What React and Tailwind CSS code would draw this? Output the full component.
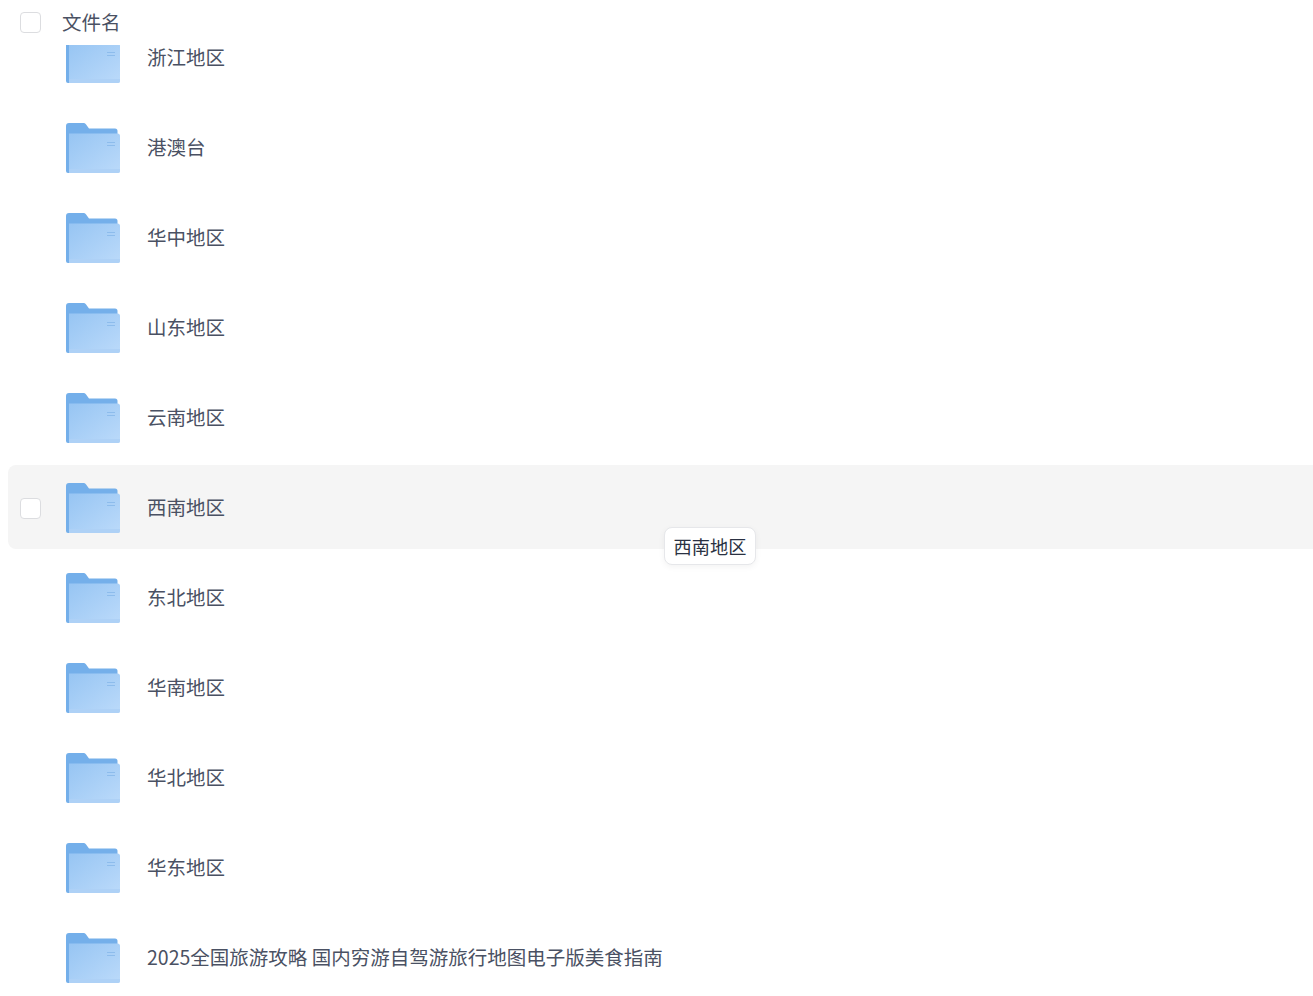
const rows = [
  "浙江地区",
  "港澳台",
  "华中地区",
  "山东地区",
  "云南地区",
  "西南地区",
  "东北地区",
  "华南地区",
  "华北地区",
  "华东地区",
  "2025全国旅游攻略 国内穷游自驾游旅行地图电子版美食指南",
];

const HOVERED = "西南地区";

function FolderIcon({ id }) {
  return (
    <svg width="54" height="50" viewBox="0 0 54 50" className="shrink-0 mt-[2px]">
      <defs>
        <linearGradient id={`front-${id}`} x1="0" y1="0" x2="1" y2="1">
          <stop offset="0" stopColor="#97c5f3" />
          <stop offset="1" stopColor="#bbdafa" />
        </linearGradient>
      </defs>
      <path d="M0 3a3 3 0 0 1 3-3h14.5a3 3 0 0 1 2.4 1.2L23 5.5h26a2.5 2.5 0 0 1 2.5 2.5v4H3v38H2a2 2 0 0 1-2-2z" fill="#74afea" />
      <path d="M3 10.5h48.5A2.5 2.5 0 0 1 54 13v35a2 2 0 0 1-2 2H3z" fill={`url(#front-${id})`} />
      <path d="M3 46h51v2a2 2 0 0 1-2 2H3z" fill="#aed1f6" />
      <path d="M41 19.5h8M41 22.5h8" stroke="#8dbcec" strokeWidth="1" />
    </svg>
  );
}

function Checkbox() {
  return <div className="w-[21px] h-[21px] bg-white border border-[#dcdde0] rounded-[4px] shrink-0" />;
}

function Row({ name, index }) {
  const hovered = name === HOVERED;
  return (
    <div className={`relative flex items-center h-[84px] mb-[6px] ml-2 rounded-l-lg ${hovered ? "bg-[#f5f5f5]" : ""}`}>
      <div className="w-[58px] pl-3 pt-[2px] shrink-0">{hovered && <Checkbox />}</div>
      <FolderIcon id={index} />
      <span className="ml-[27px] text-[19.5px] leading-6 text-[#4a5163] whitespace-pre">{name}</span>
      {hovered && (
        <div className="absolute left-[656px] top-[62px] z-10 h-[38px] w-[92px] flex items-center justify-center bg-white border border-[#e6e7ea] rounded-lg shadow-[0_2px_6px_rgba(0,0,0,0.05)] text-[18.2px] leading-[26px] text-[#2a3142]">
          {name}
        </div>
      )}
    </div>
  );
}

export default function App() {
  return (
    <div className="w-[1313px] h-[996px] overflow-hidden bg-white font-['Noto_Sans_CJK_SC','Noto_Sans',sans-serif]">
      <div className="relative z-20 h-[45px] flex items-center bg-white pl-5">
        <Checkbox />
        <span className="ml-[21px] mb-[2px] text-[19.5px] leading-6 text-[#4a5163]">文件名</span>
      </div>
      <div className="h-[951px] overflow-hidden">
        <div className="-mt-[30px]">
          {rows.map((name, i) => (
            <Row key={name} name={name} index={i} />
          ))}
        </div>
      </div>
    </div>
  );
}
